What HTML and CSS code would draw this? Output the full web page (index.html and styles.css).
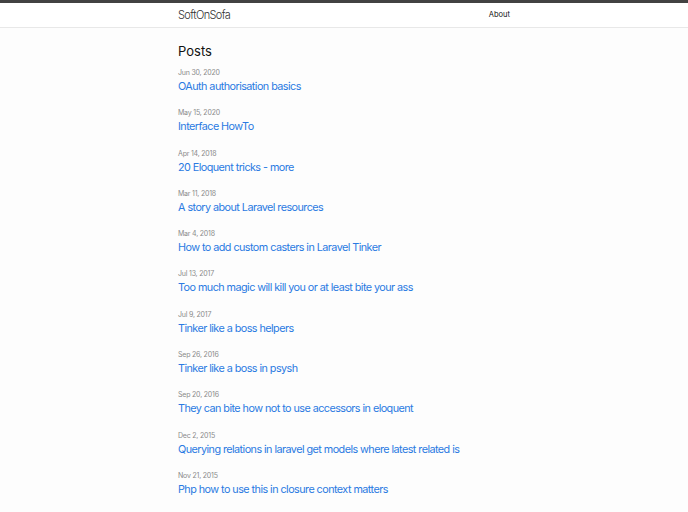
FILE: index.html
```html
<!DOCTYPE html>
<html lang="en">
<head>
    <meta charset="UTF-8">
    <meta name="viewport" content="width=device-width, initial-scale=1.0">
    <title>SoftOnSofa</title>
    <link rel="stylesheet" href="styles.css">
</head>
<body>

    <header class="site-header">
        <div class="wrapper header-inner">
            <a class="site-title" href="#">SoftOnSofa</a>
            <nav class="site-nav">
                <a class="page-link" href="#">About</a>
            </nav>
        </div>
    </header>

    <main class="wrapper">
        <h2 class="post-list-heading">Posts</h2>
        <ul class="post-list">
            <li><span class="post-meta">Jun 30, 2020</span><a class="post-link" href="#">OAuth authorisation basics</a></li>
            <li><span class="post-meta">May 15, 2020</span><a class="post-link" href="#">Interface HowTo</a></li>
            <li><span class="post-meta">Apr 14, 2018</span><a class="post-link" href="#">20 Eloquent tricks - more</a></li>
            <li><span class="post-meta">Mar 11, 2018</span><a class="post-link" href="#">A story about Laravel resources</a></li>
            <li><span class="post-meta">Mar 4, 2018</span><a class="post-link" href="#">How to add custom casters in Laravel Tinker</a></li>
            <li><span class="post-meta">Jul 13, 2017</span><a class="post-link" href="#">Too much magic will kill you or at least bite your ass</a></li>
            <li><span class="post-meta">Jul 9, 2017</span><a class="post-link" href="#">Tinker like a boss helpers</a></li>
            <li><span class="post-meta">Sep 26, 2016</span><a class="post-link" href="#">Tinker like a boss in psysh</a></li>
            <li><span class="post-meta">Sep 20, 2016</span><a class="post-link" href="#">They can bite how not to use accessors in eloquent</a></li>
            <li><span class="post-meta">Dec 2, 2015</span><a class="post-link" href="#">Querying relations in laravel get models where latest related is</a></li>
            <li><span class="post-meta">Nov 21, 2015</span><a class="post-link" href="#">Php how to use this in closure context matters</a></li>
        </ul>
    </main>

</body>
</html>
```

FILE: styles.css
```css
* { margin: 0; padding: 0; box-sizing: border-box; }
body { background: #fdfdfd; color: #111; font-family: Inter, "Liberation Sans", sans-serif; }
a { text-decoration: none; }

.wrapper { width: 332px; margin: 0 auto; }

.site-header { border-top: 3px solid #424242; border-bottom: 1px solid #e8e8e8; background: #fff; }
.header-inner { display: flex; justify-content: space-between; align-items: center; height: 24px; }
.site-title { color: #333; font-size: 11px; font-weight: 300; letter-spacing: -0.6px; line-height: 14px; }
.site-nav { display: flex; }
.page-link { color: #111; font-size: 7.5px; line-height: 10px; }

.post-list-heading { font-size: 13px; font-weight: 400; margin-top: 15px; line-height: 17px; }
.post-list { list-style: none; margin-top: 8px; }
.post-list li { display: flex; flex-direction: column; height: 40.3px; }
.post-meta { color: #8a8a8a; font-size: 7px; line-height: 10px; letter-spacing: -0.2px; margin-bottom: 1px; }
.post-link { color: #2a7ae2; font-size: 10.8px; line-height: 16px; letter-spacing: -0.55px; }
```
